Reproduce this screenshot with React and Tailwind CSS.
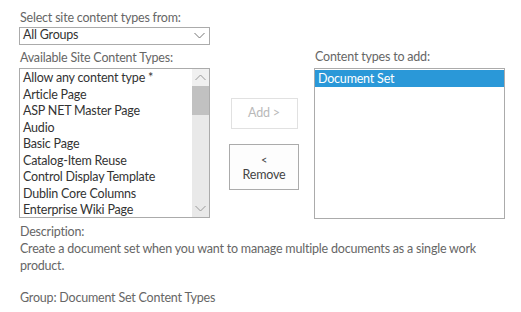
import React from 'react';

const available = [
  'Allow any content type *',
  'Article Page',
  'ASP NET Master Page',
  'Audio',
  'Basic Page',
  'Catalog-Item Reuse',
  'Control Display Template',
  'Dublin Core Columns',
  'Enterprise Wiki Page',
];

const Chevron = ({ up, className }) => (
  <svg width="11" height="7" viewBox="0 0 11 7" className={className}>
    <path d={up ? 'M0.5 6 L5.5 1 L10.5 6' : 'M0.5 1 L5.5 6 L10.5 1'} fill="none" stroke="currentColor" strokeWidth="1" />
  </svg>
);

export default function App() {
  return (
    <div className="w-[521px] h-[312px] bg-white text-[12.5px] tracking-[-0.2px] leading-[16.5px] text-[#444] pl-[19px] pt-[10px]" style={{ fontFamily: 'Lato, "Open Sans", sans-serif' }}>
      <div className="flex">
        {/* left column */}
        <div className="w-[191px] flex flex-col">
          <div className="text-[#666] pl-px">Select site content types from:</div>
          <div className="h-[18px] border border-[#ababab] flex items-center justify-between pl-[3px] pr-[4px] text-[#333]">
            <span>All Groups</span>
            <Chevron className="text-[#777]" />
          </div>
          <div className="text-[#666] pl-px mt-[5px] mb-[2px]">Available Site Content Types:</div>
          <div className="h-[150px] border border-[#ababab] flex overflow-hidden">
            <div className="flex-1 pl-[3px] pt-px text-[#333]">
              {available.map((item) => (
                <div key={item} className="whitespace-nowrap">{item}</div>
              ))}
            </div>
            <div className="w-[17px] bg-[#e9e9e9] flex flex-col">
              <div className="h-[17px] bg-[#f0f0f0] flex items-center justify-center text-[#999]">
                <Chevron up />
              </div>
              <div className="h-[29px] bg-[#c1c1c1]"></div>
              <div className="flex-1"></div>
              <div className="h-[17px] flex items-center justify-center text-[#999]">
                <Chevron />
              </div>
            </div>
          </div>
        </div>

        {/* middle buttons */}
        <div className="w-[104px] flex flex-col items-center pt-[88px] pl-[4px]">
          <div className="w-[67px] h-[31px] border border-[#e1e1e1] flex items-center justify-center text-[#b9b9b9]">
            Add &gt;
          </div>
          <div className="w-[70px] h-[46px] mt-[15px] border border-[#ababab] bg-[#fdfdfd] flex flex-col items-center justify-center text-[#444] leading-[15px]">
            <span className="text-[11px]">&lt;</span>
            <span>Remove</span>
          </div>
        </div>

        {/* right column */}
        <div className="w-[191px] flex flex-col pt-[39px]">
          <div className="text-[#666] pl-px mb-[2px]">Content types to add:</div>
          <div className="h-[151px] border border-[#ababab] pt-px">
            <div className="h-[17px] bg-[#2a98d8] text-white pl-[3px] leading-[17px]">Document Set</div>
          </div>
        </div>
      </div>

      <div className="mt-[5px] text-[#666] pl-px">
        <div>Description:</div>
        <div className="mt-[1px] w-[490px]">Create a document set when you want to manage multiple documents as a single work product.</div>
        <div className="mt-[16px]">Group: Document Set Content Types</div>
      </div>
    </div>
  );
}
